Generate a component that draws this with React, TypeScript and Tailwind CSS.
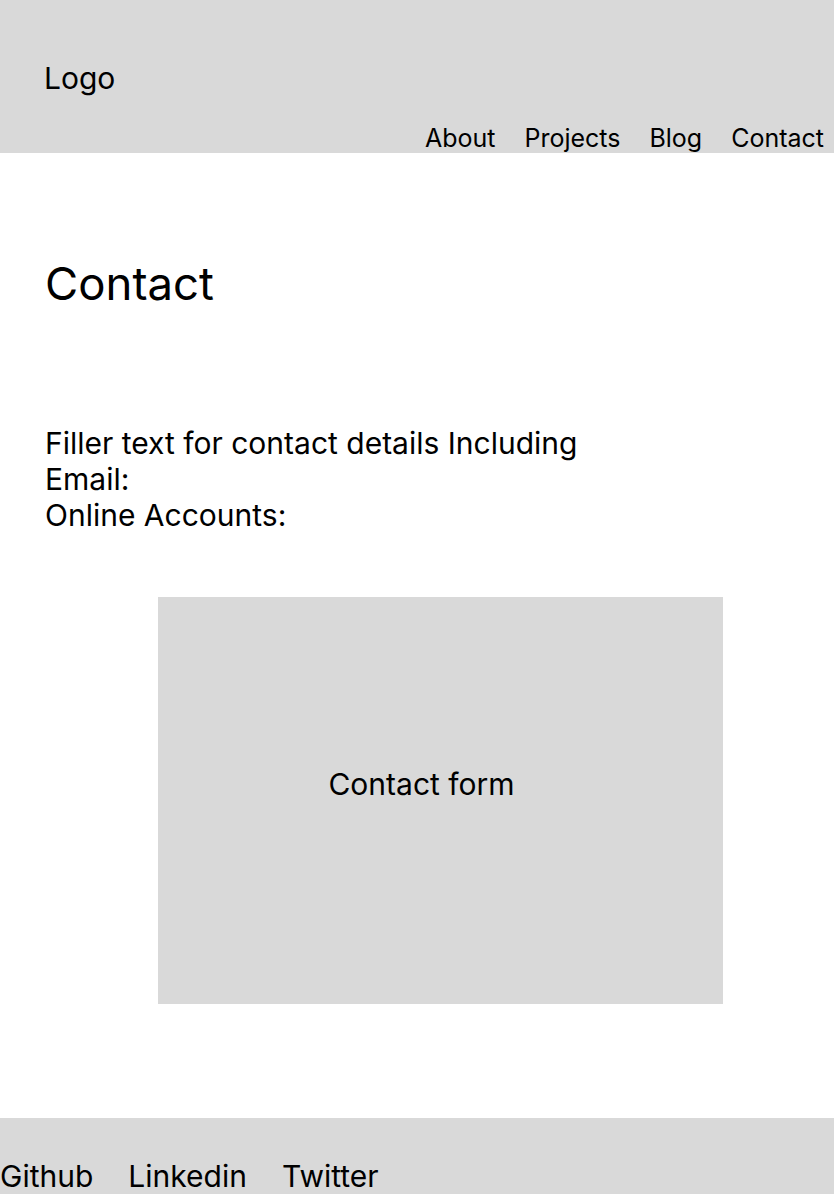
import type { ReactNode } from 'react'

const NAV = ['About', 'Projects', 'Blog', 'Contact']
const SOCIAL = ['Github', 'Linkedin', 'Twitter']

function Header() {
  return (
    <header className="flex h-[153px] flex-col justify-between bg-[#d9d9d9]">
      <div className="pl-[44px] pt-[60px] text-[30px] leading-[36px]">Logo</div>
      <nav className="flex justify-end gap-[29px] pr-[10px] text-[25px] leading-[30px]">
        {NAV.map((item) => (
          <a key={item}>{item}</a>
        ))}
      </nav>
    </header>
  )
}

function Box({ children }: { children: ReactNode }) {
  return (
    <div className="ml-[158px] mt-[64px] flex h-[407px] w-[565px] items-center justify-center bg-[#d9d9d9] pb-[34px] pr-[38px] text-[30px] leading-[36px]">
      {children}
    </div>
  )
}

export default function App() {
  return (
    <div className="min-h-[1194px] bg-white text-black" style={{ fontFamily: 'Inter, "Noto Sans", sans-serif' }}>
      <Header />
      <main>
        <h1 className="ml-[45px] mt-[109px] text-[45.5px] leading-[44px]">Contact</h1>
        <div className="ml-[45px] mt-[119px] text-[30px] leading-[36px]">
          <p>Filler text for contact details Including</p>
          <p>Email:</p>
          <p>Online Accounts:</p>
        </div>
        <Box>Contact form</Box>
      </main>
      <footer className="mt-[114px] flex h-[110px] gap-[35px] bg-[#d9d9d9] pt-[40px] text-[30px] leading-[36px]">
        {SOCIAL.map((s) => (
          <a key={s}>{s}</a>
        ))}
      </footer>
    </div>
  )
}
